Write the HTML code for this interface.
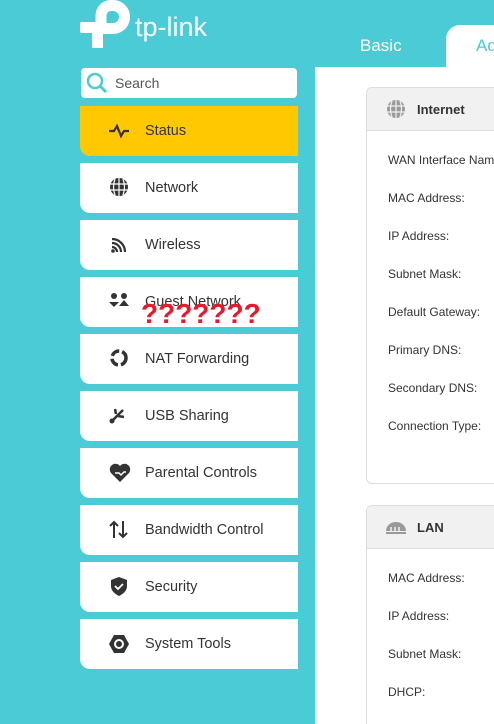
<!DOCTYPE html>
<html><head><meta charset="utf-8"><style>
*{margin:0;padding:0;box-sizing:border-box}
html{width:494px;height:724px;overflow:hidden}
body{width:494px;height:724px;overflow:hidden;background:#4acbd6;font-family:"Liberation Sans",sans-serif;position:relative}
.logo{position:absolute;left:0;top:0}
.tab{position:absolute;color:#fff;font-size:17px;top:36px}
.advtab{position:absolute;left:446px;top:25px;width:60px;height:45px;background:#fff;border-top-left-radius:14px;color:#4acbd6;font-size:17px;padding:11px 0 0 30px}
.search{position:absolute;left:81px;top:68px;width:216px;height:30px;background:#fff;border-radius:4px;font-size:14px;color:#555;padding:7px 0 0 34px}
.item{position:absolute;left:80px;width:218px;height:50px;background:#fff;border-bottom-left-radius:10px;font-size:14.5px;color:#333}
.item span{position:absolute;left:65px;top:17px}
.item svg{position:absolute;left:28px;top:14px}
.item.active{background:#ffc800}
.content{position:absolute;left:315px;top:67px;width:179px;height:657px;background:#fff}
.card{position:absolute;left:366px;width:140px;border:1px solid #ddd;border-radius:6px;background:#fff}
.ch{height:43px;background:#f1f1f1;border-bottom:1px solid #ddd;border-radius:6px 6px 0 0;font-weight:bold;font-size:13px;color:#333;padding:14px 0 0 50px;position:relative}
.lbl{position:absolute;left:388px;font-size:12px;color:#333;white-space:nowrap}
.q{position:absolute;left:141px;top:298px;color:#e8192c;font-size:28px;font-weight:bold}
</style></head><body>
<svg class="logo" width="220" height="50" viewBox="0 0 220 50">
<rect x="92" y="22" width="11" height="26" fill="#fff"/>
<rect x="80" y="22" width="25" height="11" rx="2" fill="#fff"/>
<path d="M101 28 V15 A10 10 0 0 1 111 5.5 H113 A11.5 11.5 0 0 1 113 28.5 H103" fill="none" stroke="#fff" stroke-width="11"/>
<text x="135" y="36" fill="#fff" font-size="27" font-family="Liberation Sans">tp-link</text>
</svg>
<div class="tab" style="left:360px">Basic</div>
<div class="content"></div>
<div class="advtab">Ad</div>
<div class="search"><svg style="position:absolute;left:5px;top:4px" width="22" height="22"><circle cx="9" cy="9" r="7" fill="none" stroke="#4acbd6" stroke-width="2.5"/><path d="M14 14l6 6" stroke="#4acbd6" stroke-width="3"/></svg>Search</div>

<div class="item active" style="top:106px"><svg width="22" height="22"><path d="M1 11h5l3-5 4 10 3-5h5" fill="none" stroke="#333" stroke-width="2.2"/></svg><span>Status</span></div>
<div class="item" style="top:163px"><svg width="22" height="22"><circle cx="11" cy="10" r="9" fill="#333"/><path d="M2 7h18M2 13h18M11 1v18M7 2q-3 8 0 16M15 2q3 8 0 16" stroke="#fff" stroke-width="1.2" fill="none"/></svg><span>Network</span></div>
<div class="item" style="top:220px"><svg width="22" height="22"><path d="M4 5a13 13 0 0 1 13 13M4 9a9 9 0 0 1 9 9M4 13a5 5 0 0 1 5 5" fill="none" stroke="#333" stroke-width="2.2"/><circle cx="5" cy="17" r="1.8" fill="#333"/></svg><span>Wireless</span></div>
<div class="item" style="top:277px"><svg width="24" height="22"><circle cx="6" cy="5" r="3" fill="#333"/><circle cx="16" cy="5" r="3" fill="#333"/><path d="M1 11l5 5 5-5zM11 15l5-6 5 6z" fill="#333"/></svg><span>Guest Network</span></div>
<div class="item" style="top:334px"><svg width="22" height="22"><circle cx="11" cy="10" r="7" fill="none" stroke="#333" stroke-width="3.5" stroke-dasharray="9 3"/></svg><span>NAT Forwarding</span></div>
<div class="item" style="top:391px"><svg width="22" height="22"><path d="M4 16l11-11M10 11l6 1M8 9l-1-5" stroke="#333" stroke-width="2.5"/><circle cx="4" cy="16" r="2.5" fill="#333"/></svg><span>USB Sharing</span></div>
<div class="item" style="top:448px"><svg width="24" height="22"><path d="M12 20l-9-9a5 5 0 0 1 9-7 5 5 0 0 1 9 7z" fill="#333"/><path d="M7 11h4l2 2 3-3h2" stroke="#fff" stroke-width="1.5" fill="none"/></svg><span>Parental Controls</span></div>
<div class="item" style="top:505px"><svg width="22" height="22"><path d="M6 19V3M2 7l4-4 4 4M15 2v16M11 14l4 4 4-4" fill="none" stroke="#333" stroke-width="2"/></svg><span>Bandwidth Control</span></div>
<div class="item" style="top:562px"><svg width="22" height="22"><path d="M11 1l8 3v6c0 5-4 8-8 10-4-2-8-5-8-10V4z" fill="#333"/><path d="M7 10l3 3 5-5" stroke="#fff" stroke-width="1.8" fill="none"/></svg><span>Security</span></div>
<div class="item" style="top:619px"><svg width="22" height="22"><path d="M6 2h10l5 9-5 9H6l-5-9z" fill="#333"/><circle cx="11" cy="11" r="5" fill="#fff"/><circle cx="11" cy="11" r="3" fill="#333"/></svg><span>System Tools</span></div>
<div class="q">???????</div>

<div class="card" style="top:87px;height:397px"><div class="ch"><svg style="position:absolute;left:19px;top:11px" width="20" height="20"><circle cx="10" cy="10" r="9" fill="#999"/><path d="M1 7h18M1 13h18M10 1v18M6 2q-3 8 0 16M14 2q3 8 0 16" stroke="#f1f1f1" stroke-width="1.2" fill="none"/></svg>Internet</div></div>
<div class="lbl" style="top:153px">WAN Interface Nam</div>
<div class="lbl" style="top:191px">MAC Address:</div>
<div class="lbl" style="top:229px">IP Address:</div>
<div class="lbl" style="top:267px">Subnet Mask:</div>
<div class="lbl" style="top:305px">Default Gateway:</div>
<div class="lbl" style="top:343px">Primary DNS:</div>
<div class="lbl" style="top:381px">Secondary DNS:</div>
<div class="lbl" style="top:419px">Connection Type:</div>
<div class="card" style="top:505px;height:219px;border-bottom:none;border-radius:6px 6px 0 0"><div class="ch"><svg style="position:absolute;left:18px;top:15px" width="22" height="14"><path d="M1 10a10 9 0 0 1 20 0z" fill="#999"/><path d="M6 6v4M10 6v4M14 6v4" stroke="#f1f1f1" stroke-width="1.5"/><rect x="1" y="11" width="20" height="2" fill="#999"/></svg>LAN</div></div>
<div class="lbl" style="top:571px">MAC Address:</div>
<div class="lbl" style="top:609px">IP Address:</div>
<div class="lbl" style="top:647px">Subnet Mask:</div>
<div class="lbl" style="top:685px">DHCP:</div>
</body></html>
